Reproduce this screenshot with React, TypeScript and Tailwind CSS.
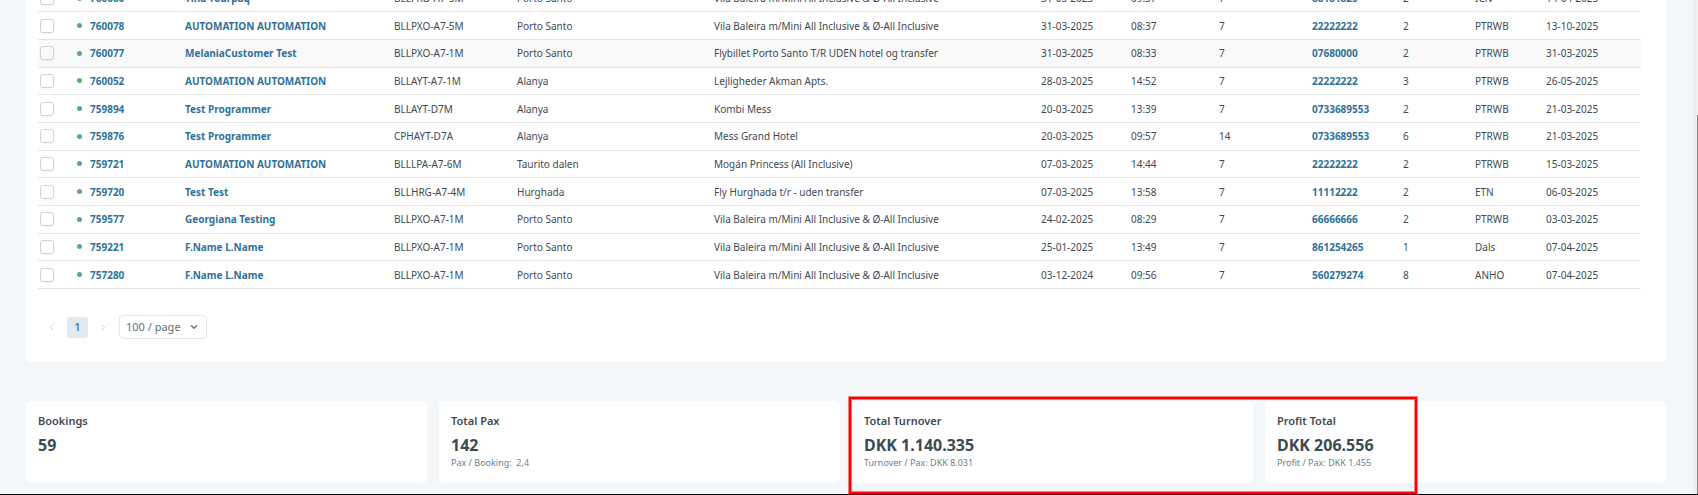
import { ChevronDown, ChevronLeft, ChevronRight } from "lucide-react";

type Booking = {
  id: string;
  customer: string;
  tour: string;
  destination: string;
  hotel: string;
  booked: string;
  time: string;
  nights: number;
  phone: string;
  pax: number;
  agent: string;
  departure: string;
  active?: boolean;
};

const BALEIRA = "Vila Baleira m/Mini All Inclusive & Ø-All Inclusive";

const bookings: Booking[] = [
  { id: "760080", customer: "Tina Tourpaq", tour: "BLLPXO-A7-5M", destination: "Porto Santo", hotel: BALEIRA, booked: "31-03-2025", time: "09:37", nights: 7, phone: "88181825", pax: 2, agent: "ICN", departure: "14-04-2025" },
  { id: "760078", customer: "AUTOMATION AUTOMATION", tour: "BLLPXO-A7-5M", destination: "Porto Santo", hotel: BALEIRA, booked: "31-03-2025", time: "08:37", nights: 7, phone: "22222222", pax: 2, agent: "PTRWB", departure: "13-10-2025" },
  { id: "760077", customer: "MelaniaCustomer Test", tour: "BLLPXO-A7-1M", destination: "Porto Santo", hotel: "Flybillet Porto Santo T/R UDEN hotel og transfer", booked: "31-03-2025", time: "08:33", nights: 7, phone: "07680000", pax: 2, agent: "PTRWB", departure: "31-03-2025", active: true },
  { id: "760052", customer: "AUTOMATION AUTOMATION", tour: "BLLAYT-A7-1M", destination: "Alanya", hotel: "Lejligheder Akman Apts.", booked: "28-03-2025", time: "14:52", nights: 7, phone: "22222222", pax: 3, agent: "PTRWB", departure: "26-05-2025" },
  { id: "759894", customer: "Test Programmer", tour: "BLLAYT-D7M", destination: "Alanya", hotel: "Kombi Mess", booked: "20-03-2025", time: "13:39", nights: 7, phone: "0733689553", pax: 2, agent: "PTRWB", departure: "21-03-2025" },
  { id: "759876", customer: "Test Programmer", tour: "CPHAYT-D7A", destination: "Alanya", hotel: "Mess Grand Hotel", booked: "20-03-2025", time: "09:57", nights: 14, phone: "0733689553", pax: 6, agent: "PTRWB", departure: "21-03-2025" },
  { id: "759721", customer: "AUTOMATION AUTOMATION", tour: "BLLLPA-A7-6M", destination: "Taurito dalen", hotel: "Mogán Princess (All Inclusive)", booked: "07-03-2025", time: "14:44", nights: 7, phone: "22222222", pax: 2, agent: "PTRWB", departure: "15-03-2025" },
  { id: "759720", customer: "Test Test", tour: "BLLHRG-A7-4M", destination: "Hurghada", hotel: "Fly Hurghada t/r - uden transfer", booked: "07-03-2025", time: "13:58", nights: 7, phone: "11112222", pax: 2, agent: "ETN", departure: "06-03-2025" },
  { id: "759577", customer: "Georgiana Testing", tour: "BLLPXO-A7-1M", destination: "Porto Santo", hotel: BALEIRA, booked: "24-02-2025", time: "08:29", nights: 7, phone: "66666666", pax: 2, agent: "PTRWB", departure: "03-03-2025" },
  { id: "759221", customer: "F.Name L.Name", tour: "BLLPXO-A7-1M", destination: "Porto Santo", hotel: BALEIRA, booked: "25-01-2025", time: "13:49", nights: 7, phone: "861254265", pax: 1, agent: "Dals", departure: "07-04-2025" },
  { id: "757280", customer: "F.Name L.Name", tour: "BLLPXO-A7-1M", destination: "Porto Santo", hotel: BALEIRA, booked: "03-12-2024", time: "09:56", nights: 7, phone: "560279274", pax: 8, agent: "ANHO", departure: "07-04-2025" },
];

const stats = [
  { title: "Bookings", value: "59", note: "" },
  { title: "Total Pax", value: "142", note: "Pax / Booking:\u00a0 2,4" },
  { title: "Total Turnover", value: "DKK 1.140.335", note: "Turnover / Pax: DKK 8.031" },
  { title: "Profit Total", value: "DKK 206.556", note: "Profit / Pax: DKK 1.455" },
];

const linkClass = "font-bold text-[#2f7299]";

function BookingRow({ b }: { b: Booking }) {
  return (
    <tr className={b.active ? "border-b border-[#e5e6e8] bg-[#f9f9f9]" : "border-b border-[#e5e6e8]"}>
      <td className="pl-0.5">
        <input
          type="checkbox"
          aria-label={`Select booking ${b.id}`}
          className="block size-3.5 appearance-none rounded-[3px] border border-[#d0d0db] bg-transparent shadow-xs"
        />
      </td>
      <td>
        <span className="flex items-center gap-2 pl-px">
          <span className="size-[5px] rounded-full bg-[#5ba88a]" />
          <a href={`#booking-${b.id}`} className={linkClass}>{b.id}</a>
        </span>
      </td>
      <td><a href={`#customer-${b.id}`} className={linkClass}>{b.customer}</a></td>
      <td>{b.tour}</td>
      <td>{b.destination}</td>
      <td>{b.hotel}</td>
      <td>{b.booked}</td>
      <td>{b.time}</td>
      <td>{b.nights}</td>
      <td><a href={`tel:${b.phone}`} className={linkClass}>{b.phone}</a></td>
      <td>{b.pax}</td>
      <td>{b.agent}</td>
      <td>{b.departure}</td>
    </tr>
  );
}

function Pagination() {
  return (
    <nav aria-label="Pagination" className="mt-[26px] flex items-center gap-2.5 pl-2">
      <button type="button" aria-label="Previous page" className="flex h-5 w-[11px] items-center justify-center text-[#c3c7cf]">
        <ChevronLeft size={9} strokeWidth={2.5} />
      </button>
      <button type="button" aria-current="page" className="size-[21px] rounded-[3px] bg-[#e1eaf0] text-[11px] font-semibold text-[#3f86ad]">
        1
      </button>
      <button type="button" aria-label="Next page" className="flex h-5 w-[11px] items-center justify-center text-[#c3c7cf]">
        <ChevronRight size={9} strokeWidth={2.5} />
      </button>
      <div className="relative">
        <select
          aria-label="Rows per page"
          className="block h-6 w-22 appearance-none rounded-[4px] border border-[#e3e5e8] bg-white pl-1.5 text-[11px] text-[#66707b]"
        >
          <option>100 / page</option>
        </select>
        <ChevronDown size={10} strokeWidth={3.5} className="pointer-events-none absolute top-[7px] right-2 text-[#6b7280]" />
      </div>
    </nav>
  );
}

export default function App() {
  return (
    <div className="flex h-screen flex-col overflow-hidden bg-[#f3f7fa] font-['Noto_Sans','Open_Sans',sans-serif] text-[11px] leading-4 text-[#3e4a52]">
      <div className="flex min-h-0 flex-1">
        <main className="min-w-0 flex-1 pr-[27px] pl-[26px]">
          <section className="h-[362px] rounded-b-[5px] bg-white pr-[25px] pl-3">
            <div className="flow-root">
              <table className="-mt-[15px] h-[304px] w-full table-fixed border-collapse text-[10px] whitespace-nowrap">
                <colgroup>
                  <col className="w-[38px]" />
                  <col className="w-[109px]" />
                  <col className="w-[209px]" />
                  <col className="w-[123px]" />
                  <col className="w-[197px]" />
                  <col className="w-[327px]" />
                  <col className="w-[90px]" />
                  <col className="w-[88px]" />
                  <col className="w-[93px]" />
                  <col className="w-[91px]" />
                  <col className="w-[72px]" />
                  <col className="w-[71px]" />
                  <col className="w-[95px]" />
                </colgroup>
                <tbody>
                  {bookings.map((b) => (
                    <BookingRow key={b.id} b={b} />
                  ))}
                </tbody>
              </table>
            </div>
            <Pagination />
          </section>

          <section className="relative mt-[39px] grid grid-cols-4 gap-3">
            {stats.map((s) => (
              <article key={s.title} className="h-[82px] rounded-[5px] bg-white px-3 pt-3">
                <h2 className="leading-4 font-semibold">{s.title}</h2>
                <p className="mt-1.5 text-[16px] leading-5 font-bold">{s.value}</p>
                <p className="text-[9px] leading-4 text-[#6c7f88]">{s.note}</p>
              </article>
            ))}
            <div className="pointer-events-none absolute -top-1 -bottom-[11px] left-[50.2%] w-[34.6%] border-2 border-[#fe0000] shadow-[0_0_0_1px_#fe000080,inset_0_0_0_1px_#fe000080]" />
          </section>
        </main>
        <div className="flex w-[5px] flex-col bg-[#f0f0f0] pt-[115px]">
          <div className="w-px flex-1 self-end bg-[#858585]" />
        </div>
      </div>
      <div className="h-px bg-black" />
    </div>
  );
}
